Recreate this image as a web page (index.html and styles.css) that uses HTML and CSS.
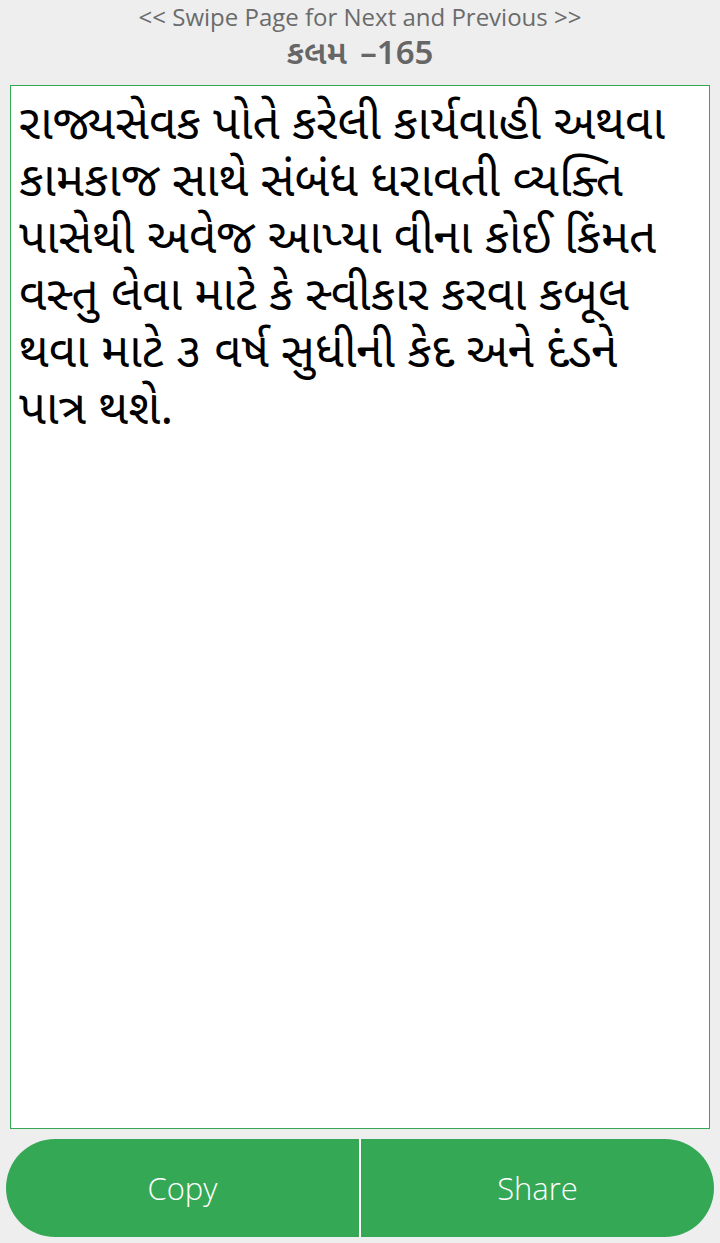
FILE: index.html
```
<!DOCTYPE html>
<html lang="gu">
<head>
<meta charset="utf-8">
<link rel="stylesheet" href="styles.css">
</head>
<body>
<div class="page">
  <header class="head">
    <div class="hint">&lt;&lt; Swipe Page for Next and Previous &gt;&gt;</div>
    <div class="title">કલમ –165</div>
  </header>
  <main class="box">
    <p class="text">રાજ્યસેવક પોતે કરેલી કાર્યવાહી અથવા કામકાજ સાથે સંબંધ ધરાવતી વ્યક્તિ પાસેથી અવેજ આપ્યા વીના કોઈ કિંમત વસ્તુ લેવા માટે કે સ્વીકાર કરવા કબૂલ થવા માટે ૩ વર્ષ સુધીની કેદ અને દંડને પાત્ર થશે.</p>
  </main>
  <div class="actions">
    <button class="btn btn-left">Copy</button>
    <button class="btn btn-right">Share</button>
  </div>
</div>
</body>
</html>
```
FILE: styles.css
```
html, body {
  margin: 0;
  padding: 0;
  background: #eeeeee;
}
.page {
  width: 720px;
  height: 1243px;
  display: flex;
  flex-direction: column;
  box-sizing: border-box;
}
.head {
  display: flex;
  flex-direction: column;
  align-items: center;
  padding-top: 2px;
  height: 82px;
  box-sizing: border-box;
}
.hint {
  font-family: "Open Sans", "Noto Sans", sans-serif;
  font-size: 24px;
  line-height: 30px;
  color: #6b6b6b;
  letter-spacing: 0;
}
.title {
  font-family: "Noto Sans", "Noto Sans Gujarati", sans-serif;
  font-weight: 600;
  font-size: 33px;
  line-height: 40px;
  color: #666666;
  word-spacing: 5px;
}
.box {
  margin: 3px 10px 0 10px;
  height: 1044px;
  box-sizing: border-box;
  background: #ffffff;
  border: 1px solid #35a856;
  padding: 0 18px 0 8px;
}
.text {
  margin: 0;
  padding-top: 6px;
  font-family: "Noto Sans", "Noto Sans Gujarati", sans-serif;
  font-size: 47.5px;
  font-weight: 400;
  line-height: 57px;
  color: #000000;
}
.actions {
  display: flex;
  margin: 10px 6px 0 6px;
  height: 98px;
}
.btn {
  flex: 1;
  border: none;
  background: #35a856;
  color: #ffffff;
  font-family: "Open Sans", "Noto Sans", sans-serif;
  font-size: 31px;
  font-weight: 300;
  padding: 0;
}
.btn-left {
  border-radius: 49px 0 0 49px;
  border-right: 1px solid #ffffff;
}
.btn-right {
  border-radius: 0 49px 49px 0;
  border-left: 1px solid #ffffff;
}
```
